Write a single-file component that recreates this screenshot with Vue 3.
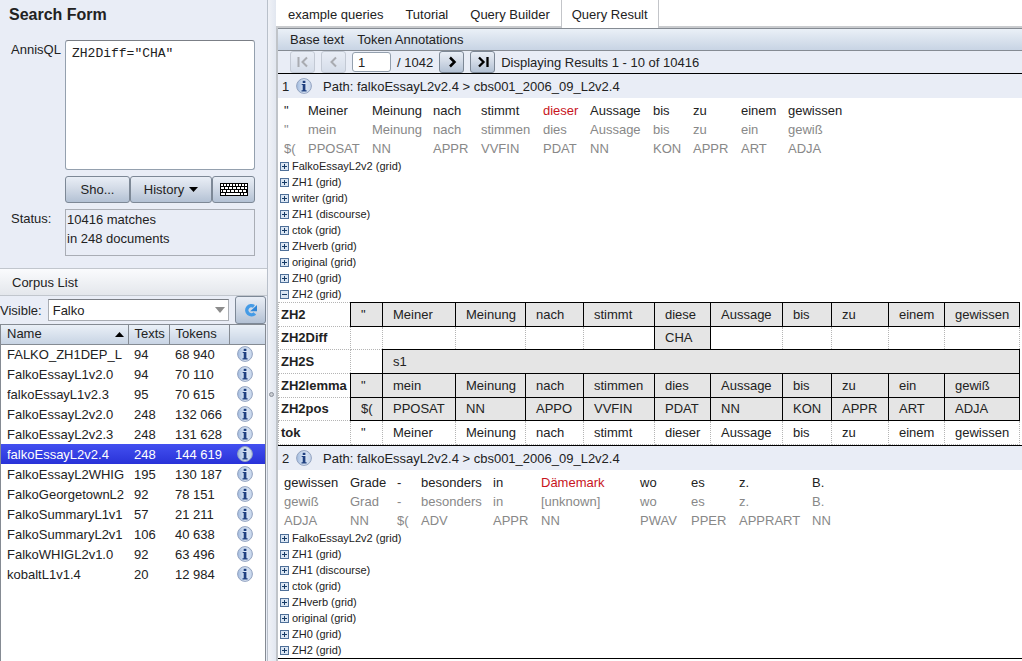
<script setup>
import { ref } from 'vue'

const query = ref('ZH2Diff="CHA"')
const page = ref('1')
const visible = ref('Falko')
const selected = ref('falkoEssayL2v2.4')
const tabs = ['example queries', 'Tutorial', 'Query Builder', 'Query Result']
const activeTab = ref('Query Result')

const corpora = [
  ['FALKO_ZH1DEP_L', '94', '68 940'],
  ['FalkoEssayL1v2.0', '94', '70 110'],
  ['falkoEssayL1v2.3', '95', '70 615'],
  ['FalkoEssayL2v2.0', '248', '132 066'],
  ['FalkoEssayL2v2.3', '248', '131 628'],
  ['falkoEssayL2v2.4', '248', '144 619'],
  ['FalkoEssayL2WHIG', '195', '130 187'],
  ['FalkoGeorgetownL2', '92', '78 151'],
  ['FalkoSummaryL1v1', '57', '21 211'],
  ['FalkoSummaryL2v1', '106', '40 638'],
  ['FalkoWHIGL2v1.0', '92', '63 496'],
  ['kobaltL1v1.4', '20', '12 984'],
]

const tokenWords = ['"', 'Meiner', 'Meinung', 'nach', 'stimmt', 'dieser', 'Aussage', 'bis', 'zu', 'einem', 'gewissen']
const lemmas = ['"', 'mein', 'Meinung', 'nach', 'stimmen', 'dies', 'Aussage', 'bis', 'zu', 'ein', 'gewiß']

const results = [
  {
    no: 1,
    path: 'Path: falkoEssayL2v2.4 > cbs001_2006_09_L2v2.4',
    hit: 5,
    cols: [24, 64, 61, 48, 62, 47, 63, 40, 48, 47, 66],
    rows: [
      tokenWords,
      lemmas,
      ['$(', 'PPOSAT', 'NN', 'APPR', 'VVFIN', 'PDAT', 'NN', 'KON', 'APPR', 'ART', 'ADJA'],
    ],
    layers: ['FalkoEssayL2v2 (grid)', 'ZH1 (grid)', 'writer (grid)', 'ZH1 (discourse)', 'ctok (grid)', 'ZHverb (grid)', 'original (grid)', 'ZH0 (grid)', 'ZH2 (grid)'],
    grid: [
      { name: 'ZH2', cells: ['"', 'Meiner', 'Meinung', 'nach', 'stimmt', 'diese', 'Aussage', 'bis', 'zu', 'einem', 'gewissen'].map((t) => ({ t, on: true })) },
      { name: 'ZH2Diff', cells: tokenWords.map((_, i) => (i === 5 ? { t: 'CHA', on: true } : { t: '' })) },
      { name: 'ZH2S', cells: [{ t: '' }, { t: 's1', on: true, span: 10 }] },
      { name: 'ZH2lemma', cells: lemmas.map((t) => ({ t, on: true })) },
      { name: 'ZH2pos', cells: ['$(', 'PPOSAT', 'NN', 'APPO', 'VVFIN', 'PDAT', 'NN', 'KON', 'APPR', 'ART', 'ADJA'].map((t) => ({ t, on: true })) },
      { name: 'tok', cells: tokenWords.map((t) => ({ t })) },
    ],
  },
  {
    no: 2,
    path: 'Path: falkoEssayL2v2.4 > cbs001_2006_09_L2v2.4',
    hit: 5,
    cols: [66, 47, 24, 72, 48, 99, 51, 48, 73, 40],
    rows: [
      ['gewissen', 'Grade', '-', 'besonders', 'in', 'Dämemark', 'wo', 'es', 'z.', 'B.'],
      ['gewiß', 'Grad', '-', 'besonders', 'in', '[unknown]', 'wo', 'es', 'z.', 'B.'],
      ['ADJA', 'NN', '$(', 'ADV', 'APPR', 'NN', 'PWAV', 'PPER', 'APPRART', 'NN'],
    ],
    layers: ['FalkoEssayL2v2 (grid)', 'ZH1 (grid)', 'ZH1 (discourse)', 'ctok (grid)', 'ZHverb (grid)', 'original (grid)', 'ZH0 (grid)', 'ZH2 (grid)'],
    grid: null,
  },
]

const gridCols = [72, 32, 73, 70, 58, 71, 56, 72, 49, 57, 56, 75]
</script>

<template>
  <svg class="defs" aria-hidden="true">
    <defs>
      <linearGradient id="ball" x1="0" y1="0" x2="1" y2="0">
        <stop offset="0" stop-color="#9fb9de" />
        <stop offset="0.5" stop-color="#dce7f5" />
        <stop offset="1" stop-color="#c3d3ea" />
      </linearGradient>
      <symbol id="info" viewBox="0 0 16 16">
        <circle cx="8" cy="8" r="7.4" fill="url(#ball)" stroke="#93a3c0" />
        <path d="M6.700 2.700h2.700v2.200H6.700zM5.700 6h3.700v6.300h1.200v1.100H5.500v-1.100h1.200V7.100h-1z" fill="#1f4080" />
      </symbol>
    </defs>
  </svg>

  <div class="app">
    <aside class="side">
      <h1>Search Form</h1>
      <form class="form" @submit.prevent>
        <label for="aql">AnnisQL</label>
        <textarea id="aql" v-model="query" spellcheck="false"></textarea>
        <div class="actions">
          <button type="button" class="btn show">Sho...</button>
          <button type="button" class="btn history">History
            <svg width="9" height="5" viewBox="0 0 9 5"><path d="M0 0h9L4.500 5z" fill="#000" /></svg>
          </button>
          <button type="button" class="btn keys" aria-label="Keyboard">
            <svg width="28" height="13" viewBox="0 0 28 13" shape-rendering="crispEdges">
              <path d="M0 0h28v13H0z" fill="#000" />
              <g stroke="#fff" stroke-width="2">
                <path d="M1 2h26" stroke-dasharray="2 1" />
                <path d="M1 5h26" stroke-dasharray="3 1" />
                <path d="M1 8h26" stroke-dasharray="3 1" stroke-dashoffset="2" />
                <path d="M1 11h4M6 11h14M21 11h2M24 11h3" />
              </g>
            </svg>
          </button>
        </div>
        <span class="status-label">Status:</span>
        <output class="status">10416 matches<br />in 248 documents</output>
      </form>

      <h2>Corpus List</h2>
      <div class="filter">
        <label for="visible">Visible:</label>
        <div class="combo">
          <select id="visible" v-model="visible"><option>Falko</option></select>
          <svg width="10" height="6" viewBox="0 0 10 6"><path d="M0 0h10L5 6z" fill="#8c8c8c" /></svg>
        </div>
        <button type="button" class="btn reload" aria-label="Reload">
          <svg width="16" height="16" viewBox="0 0 16 16">
            <path d="M11.800 11.300A4.600 4.600 0 1 1 11 4.400" fill="none" stroke="#459be6" stroke-width="3.400" />
            <path d="M14 3v6.200H7.200z" fill="#2f86d8" />
          </svg>
        </button>
      </div>
      <div class="corpus-box">
        <table class="corpora">
          <colgroup><col class="c-name" /><col class="c-texts" /><col class="c-tokens" /><col /></colgroup>
          <thead>
            <tr>
              <th><span class="sorted">Name<svg width="9" height="5" viewBox="0 0 9 5"><path d="M0 5h9L4.500 0z" fill="#000" /></svg></span></th>
              <th>Texts</th>
              <th>Tokens</th>
              <th></th>
            </tr>
          </thead>
          <tbody>
            <tr v-for="c in corpora" :key="c[0]" :class="{ selected: c[0] === selected }" @click="selected = c[0]">
              <td class="name"><div class="clip">{{ c[0] }}</div></td>
              <td>{{ c[1] }}</td>
              <td>{{ c[2] }}</td>
              <td class="i-cell"><button type="button" class="bare" aria-label="Corpus info"><svg width="16" height="16"><use href="#info" /></svg></button></td>
            </tr>
          </tbody>
        </table>
      </div>
    </aside>

    <div class="splitter"><i></i></div>

    <main class="main">
      <nav class="tabs" role="tablist">
        <button v-for="t in tabs" :key="t" type="button" role="tab" :aria-selected="t === activeTab" :class="['tab', { active: t === activeTab }]" @click="activeTab = t">{{ t }}</button>
      </nav>
      <div class="content">
        <div class="menu">
          <button type="button" class="bare">Base text</button>
          <button type="button" class="bare">Token Annotations</button>
        </div>
        <div class="pager">
          <button type="button" class="btn nav" disabled aria-label="First page">
            <svg width="12" height="12" viewBox="0 0 12 12"><path d="M1.500 1v10M10 1.500L5.500 6l4.500 4.500" fill="none" stroke="#333" stroke-width="2" /></svg>
          </button>
          <button type="button" class="btn nav" disabled aria-label="Previous page">
            <svg width="12" height="12" viewBox="0 0 12 12"><path d="M8 1.500L3.500 6 8 10.500" fill="none" stroke="#333" stroke-width="2" /></svg>
          </button>
          <input v-model="page" aria-label="Page" />
          <span>/ 1042</span>
          <button type="button" class="btn nav" aria-label="Next page">
            <svg width="12" height="12" viewBox="0 0 12 12"><path d="M4 1.500L8.500 6 4 10.500" fill="none" stroke="#000" stroke-width="2.500" /></svg>
          </button>
          <button type="button" class="btn nav" aria-label="Last page">
            <svg width="12" height="12" viewBox="0 0 12 12"><path d="M2 1.500L6.500 6 2 10.500M10.500 1v10" fill="none" stroke="#000" stroke-width="2.300" /></svg>
          </button>
          <span>Displaying Results 1 - 10 of 10416</span>
        </div>

        <section v-for="r in results" :key="r.no" class="result">
          <header>
            <span class="no">{{ r.no }}</span>
            <button type="button" class="bare" aria-label="Document info"><svg width="16" height="16"><use href="#info" /></svg></button>
            <span class="path">{{ r.path }}</span>
          </header>
          <table class="kwic">
            <colgroup><col v-for="(w, i) in r.cols" :key="i" :style="{ width: w + 'px' }" /></colgroup>
            <tbody>
              <tr v-for="(row, ri) in r.rows" :key="ri">
                <td v-for="(t, i) in row" :key="i" :class="{ hit: ri === 0 && i === r.hit }">{{ t }}</td>
              </tr>
            </tbody>
          </table>
          <ul class="layers">
            <li v-for="l in r.layers" :key="l">
              <button type="button" class="bare layer">
                <svg width="9" height="9" viewBox="0 0 9 9" shape-rendering="crispEdges">
                  <rect x="0.5" y="0.5" width="8" height="8" fill="#dbe6f3" stroke="#4f7099" />
                  <path :d="r.grid && l === 'ZH2 (grid)' ? 'M2 4.500h5' : 'M2 4.500h5M4.500 2v5'" stroke="#163a66" />
                </svg>{{ l }}
              </button>
            </li>
          </ul>
          <table v-if="r.grid" class="grid">
            <colgroup><col v-for="(w, i) in gridCols" :key="i" :style="{ width: w + 'px' }" /></colgroup>
            <tbody>
              <tr v-for="g in r.grid" :key="g.name">
                <th scope="row">{{ g.name }}</th>
                <td v-for="(c, i) in g.cells" :key="i" :colspan="c.span || 1" :class="{ on: c.on }">{{ c.t }}</td>
              </tr>
            </tbody>
          </table>
        </section>
      </div>
    </main>
  </div>
</template>

<style>
body {
  overflow: hidden;
}
</style>

<style scoped>
.defs {
  position: absolute;
  width: 0;
  height: 0;
}
.app {
  display: flex;
  height: 100vh;
  font: 13px/19px "Liberation Sans", Arial, sans-serif;
  color: #222;
  background: #fff;
}
.app * {
  box-sizing: border-box;
}
button, input, select {
  font: inherit;
  color: inherit;
}
svg {
  display: block;
  flex: none;
}
.bare {
  display: block;
  padding: 0;
  border: 0;
  background: none;
}
.btn {
  display: flex;
  align-items: center;
  justify-content: center;
  padding: 0;
  border: 1px solid #7d8896;
  border-radius: 3px;
  background: linear-gradient(#e9eef6, #d3dbe7 45%, #b3c1d4);
}

.side {
  display: flex;
  flex-direction: column;
  flex: none;
  width: 268px;
  background: #e9edf6;
  border-right: 1px solid #b9c0ca;
}
h1 {
  margin: 0;
  padding: 5px 9px 15px;
  font-size: 16px;
  line-height: 20px;
}
.form {
  display: grid;
  grid-template-columns: 50px 1fr;
  column-gap: 4px;
  row-gap: 6px;
  padding: 0 12px 12px 11px;
}
textarea {
  display: block;
  width: 100%;
  height: 130px;
  padding: 5px 6px;
  border: 1px solid #94a0ae;
  border-top-color: #7b7f86;
  border-radius: 3px;
  background: #fff;
  color: #222;
  font: 13px/16px "Liberation Mono", monospace;
  resize: none;
}
.actions {
  grid-column: 2;
  display: flex;
  height: 27px;
}
.show {
  width: 65px;
}
.history {
  flex: 1;
  gap: 5px;
}
.keys {
  width: 43px;
}
.status {
  height: 47px;
  border: 1px solid #a9adb5;
  padding-left: 1px;
}
h2 {
  margin: 0;
  padding: 1px 12px 0;
  font-size: 13px;
  font-weight: normal;
  line-height: 25px;
  border-top: 1px solid #c1c6cd;
  border-bottom: 1px solid #c1c6cd;
  background: linear-gradient(#fafbfd, #e4e7ec);
}
.filter {
  display: flex;
  align-items: center;
  gap: 6px;
  height: 28px;
  padding-right: 1px;
}
.filter label {
  flex: none;
}
.combo {
  display: flex;
  align-items: center;
  flex: 1;
  height: 22px;
  padding-right: 3px;
  border: 1px solid #a9adb3;
  border-top-color: #7b7f86;
  background: #fff;
}
select {
  flex: 1;
  padding: 0 4px;
  border: 0;
  background: none;
  appearance: none;
}
.reload {
  width: 31px;
  height: 28px;
}
.corpus-box {
  flex: 1;
  margin-right: 1px;
  border: 1px solid #858b93;
  border-bottom: 0;
  background: #fff;
  overflow: hidden;
}
.corpora {
  width: 100%;
  table-layout: fixed;
  border-collapse: collapse;
}
.c-name {
  width: 127px;
}
.c-texts {
  width: 41px;
}
.c-tokens {
  width: 60px;
}
.corpora th {
  height: 19px;
  padding: 0 4px 0 6px;
  border-right: 1px solid #858b93;
  border-bottom: 1px solid #858b93;
  background: linear-gradient(#eaf0f7, #c8d4e4);
  font-weight: normal;
  line-height: 18px;
  text-align: left;
}
.corpora th:last-child {
  border-right: 0;
}
.sorted {
  display: flex;
  align-items: center;
  justify-content: space-between;
}
.corpora td {
  height: 20px;
  padding: 0 6px;
}
.corpora .name {
  padding-right: 2px;
}
.clip {
  overflow: hidden;
  white-space: nowrap;
}
.corpora .i-cell {
  padding: 0 8px;
}
.selected {
  background: linear-gradient(#4350f0, #2932d8);
  color: #fff;
}

.splitter {
  display: flex;
  align-items: center;
  flex: none;
  width: 8px;
  padding: 128px 0 0 1px;
  background: linear-gradient(90deg, #f0f2f7, #e2e7f0);
}
.splitter i {
  width: 5px;
  height: 5px;
  border: 1px solid #8a909a;
  border-radius: 50%;
  background: #c9ccd2;
}

.main {
  display: flex;
  flex-direction: column;
  flex: 1;
  min-width: 0;
}
.tabs {
  display: flex;
  height: 28px;
  padding-left: 1px;
  border-bottom: 2px solid #c9cbce;
}
.tab {
  height: 28px;
  padding: 1px 10px 0;
  border: 1px solid transparent;
  border-width: 0 1px;
  background: none;
}
.tab.active {
  border-color: #c3c5c9;
  background: #fff;
}
.content {
  flex: 1;
  border-left: 2px solid #c0c4c9;
  overflow: hidden;
}
.menu {
  display: flex;
  align-items: center;
  gap: 13px;
  height: 23px;
  padding-left: 12px;
  border-top: 1px solid #858b93;
  border-bottom: 1px solid #858b93;
  background: linear-gradient(#eaf0f7, #c8d4e4);
}
.pager {
  display: flex;
  align-items: center;
  gap: 6px;
  height: 22px;
  padding-left: 12px;
  background: #e9edf6;
}
.nav {
  width: 25px;
  height: 22px;
}
.nav:disabled {
  opacity: 0.35;
}
.pager input {
  width: 39px;
  height: 20px;
  padding: 0 5px;
  border: 1px solid #94a0ae;
  border-radius: 3px;
  background: #fff;
}
.result header {
  display: flex;
  align-items: center;
  height: 25px;
  padding-left: 4px;
  border-top: 1px solid #000;
  background: #e9edf6;
}
.no {
  width: 14px;
}
.path {
  padding-left: 11px;
}
.result:last-child {
  border-bottom: 1px solid #000;
}
.kwic {
  width: max-content;
  margin: 3px 0 0 6px;
  border-collapse: collapse;
}
.kwic td {
  height: 19px;
  padding: 0;
  color: #888;
  white-space: nowrap;
}
.kwic tr:first-child td {
  color: #222;
}
.kwic tr:first-child .hit {
  color: #c8141c;
}
.layers {
  margin: 0;
  padding: 0 0 0 2px;
  list-style: none;
}
.layer {
  display: flex;
  align-items: center;
  gap: 3px;
  font-size: 11px;
  line-height: 16px;
}
.grid {
  width: 742px;
  height: 143px;
  table-layout: fixed;
  border-collapse: collapse;
}
.grid th, .grid td {
  padding: 0 0 0 10px;
  border: 1px dotted #b5b5b5;
  text-align: left;
  white-space: nowrap;
}
.grid th {
  padding-left: 2px;
}
.grid .on {
  border: 1px solid #000;
  background: #e5e5e5;
}
</style>
